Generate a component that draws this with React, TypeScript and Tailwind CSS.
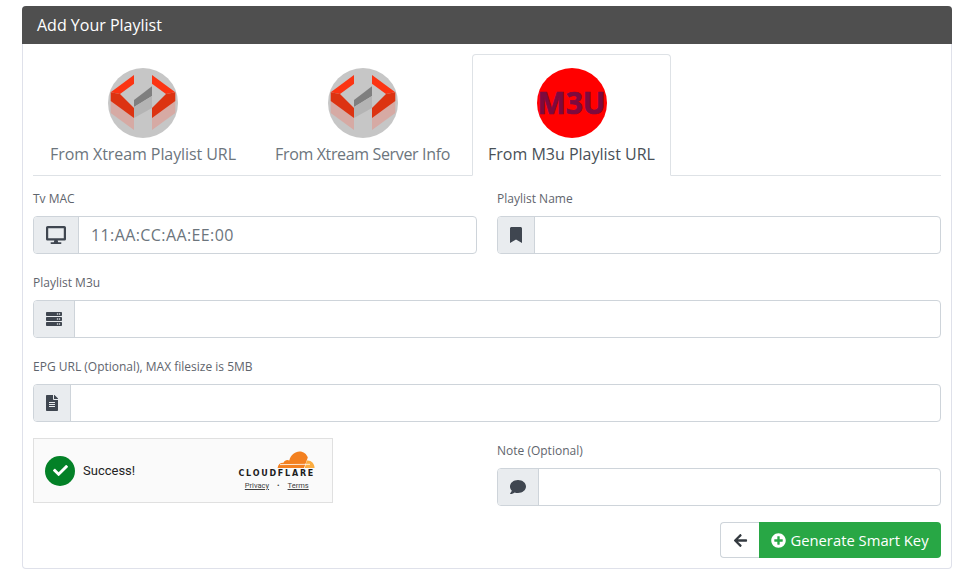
import React from "react";
import { FaDesktop, FaBookmark, FaServer, FaFileAlt, FaComment, FaArrowLeft, FaPlusCircle, FaCheck } from "react-icons/fa";

function XtreamLogo() {
  return (
    <svg width="70" height="70" viewBox="0 0 70 70" className="block">
      <circle cx="35" cy="35" r="35" fill="#c6c6c6" />
      <polygon points="26,32 44,18.3 44,28 26,39" fill="#7f7f7f" />
      <polygon points="26,39 44,28 44,40 26,50" fill="#b4b4b4" />
      {[false, true].map((m) => (
        <g key={String(m)} transform={m ? "translate(70,0) scale(-1,1)" : undefined}>
          <polygon points="2.7,33 14,34 26,43 26,62 2.7,45" fill="#d6aaa4" />
          <polygon points="26,7 26,15.7 12,26 2.7,24.3" fill="#fb3413" />
          <polygon points="2.7,24.3 12,26 26,40 26,50 2.7,33" fill="#dc3311" />
        </g>
      ))}
    </svg>
  );
}

function M3uLogo() {
  return (
    <div className="flex h-[70px] w-[70px] items-center justify-center rounded-full bg-[#ff0000]">
      <span className="font-['Noto_Sans'] text-[30px] leading-none font-bold text-[#7d0a3e] [-webkit-text-stroke:0.7px_#7d0a3e]">M3U</span>
    </div>
  );
}

function CloudflareCloud() {
  return (
    <svg width="38" height="19" viewBox="0 0 38 19" className="block">
      <path d="M0.6 18 C1 14.5 3.5 12.6 6.5 12.8 C7.6 10.2 10.4 9.4 12.3 10.6 C13.6 5 18 1.5 22.5 1.5 C26.6 1.5 29.6 4 30.8 7.6 L27 18 Z" fill="#f38020" />
      <path d="M27.8 18 L29.8 10.5 C33.6 9.8 37.4 12.8 37.6 18 Z" fill="#fbad41" />
      <path d="M3 14.6 L33 14.3" stroke="#fff" strokeWidth="0.8" />
    </svg>
  );
}

function Field({ label, icon, addonW, children }: { label: string; icon: React.ReactNode; addonW: string; children?: React.ReactNode }) {
  return (
    <div className="flex flex-col">
      <label className="mb-[13px] flex h-[8px] items-center text-[12px] text-[#5f656d]">{label}</label>
      <InputGroup icon={icon} addonW={addonW}>{children}</InputGroup>
    </div>
  );
}

function InputGroup({ icon, addonW, children }: { icon: React.ReactNode; addonW: string; children?: React.ReactNode }) {
  return (
    <div className="flex h-[38px] overflow-hidden rounded border border-[#ced4da] bg-white">
      <div className={`flex shrink-0 items-center justify-center border-r border-[#ced4da] bg-[#e9ecef] text-[#3f4650] ${addonW}`}>{icon}</div>
      <div className="flex flex-1 items-center pl-3 text-[16px] text-[#6c757d]">{children}</div>
    </div>
  );
}

function Tab({ active, label, logo, w, tight }: { active?: boolean; label: string; logo: React.ReactNode; w: string; tight?: string }) {
  return (
    <div className={`-mb-px flex h-[122px] flex-col items-center rounded-t border pt-[13px] ${w} ${active ? "border-[#dee2e6] border-b-white bg-white text-[#495057]" : "border-transparent text-[#6c757d]"}`}>
      {logo}
      <span className={`mt-[4px] text-[16px] leading-6 whitespace-nowrap ${tight ?? ""}`}>{label}</span>
    </div>
  );
}

export default function App() {
  return (
    <div className="min-h-[582px] bg-white pt-[6px] pr-[9px] pl-[22px] font-['Open_Sans',sans-serif]">
      <div className="h-[563px] rounded border border-t-0 border-[#dfe1ea]">
        <div className="-mx-px flex h-[38px] items-center rounded-t bg-[#4f4f4f] px-[15px] text-[16px] text-white">Add Your Playlist</div>
        <div className="px-[10px] pt-[10px]">
          <div className="flex h-[122px] gap-[5px] border-b border-[#dee2e6]">
            <Tab label="From Xtream Playlist URL" logo={<XtreamLogo />} w="w-[220px]" tight="tracking-[-0.08px]" />
            <Tab label="From Xtream Server Info" logo={<XtreamLogo />} w="w-[209px]" tight="tracking-[-0.35px]" />
            <Tab active label="From M3u Playlist URL" logo={<M3uLogo />} w="w-[199px]" />
          </div>
          <div className="mt-[19px] grid grid-cols-2 gap-x-[20px]">
            <Field label="Tv MAC" icon={<FaDesktop size={20} />} addonW="w-[45px]">
              <span className="tracking-[0.4px]">11:AA:CC:AA:EE:00</span>
            </Field>
            <Field label="Playlist Name" icon={<FaBookmark size={16} />} addonW="w-[37px]" />
          </div>
          <div className="mt-[25px]">
            <Field label="Playlist M3u" icon={<FaServer size={16} />} addonW="w-[41px]" />
          </div>
          <div className="mt-[25px]">
            <Field label="EPG URL (Optional), MAX filesize is 5MB" icon={<FaFileAlt size={16} />} addonW="w-[37px]" />
          </div>
          <div className="mt-[16px] grid grid-cols-2 gap-x-[20px]">
            <div className="flex h-[65px] w-[300px] items-center justify-between border border-[#e0e0e0] bg-[#fafafa] pr-[17px] pl-[11px]">
              <div className="flex items-center gap-[8px]">
                <div className="flex h-[30px] w-[30px] items-center justify-center rounded-full bg-[#038127] text-white"><FaCheck size={15} /></div>
                <span className="font-['Roboto'] text-[13px] text-[#232323]">Success!</span>
              </div>
              <div className="flex flex-col items-center">
                <div className="flex w-full justify-end"><CloudflareCloud /></div>
                <span className="font-['DejaVu_Sans'] text-[8px] leading-[10px] font-bold tracking-[1.75px] text-[#1d1d1d]">CLOUDFLARE</span>
                <div className="mt-[2px] flex gap-[8px] font-['Roboto'] text-[7.5px] leading-[10px] text-[#404040]">
                  <span className="underline">Privacy</span><span>•</span><span className="underline">Terms</span>
                </div>
              </div>
            </div>
            <div className="pt-[9px]">
              <Field label="Note (Optional)" icon={<FaComment size={16} />} addonW="w-[41px]" />
            </div>
          </div>
          <div className="mt-[16px] flex justify-end">
            <div className="flex h-[36px] w-[39px] items-center justify-center rounded-l border border-r-0 border-[#ced4da] text-[#343a40]"><FaArrowLeft size={15} /></div>
            <div className="flex h-[36px] w-[182px] items-center justify-center gap-[4px] rounded-r bg-[#28a745] text-[14.8px] text-white"><FaPlusCircle size={15} />Generate Smart Key</div>
          </div>
        </div>
      </div>
    </div>
  );
}
